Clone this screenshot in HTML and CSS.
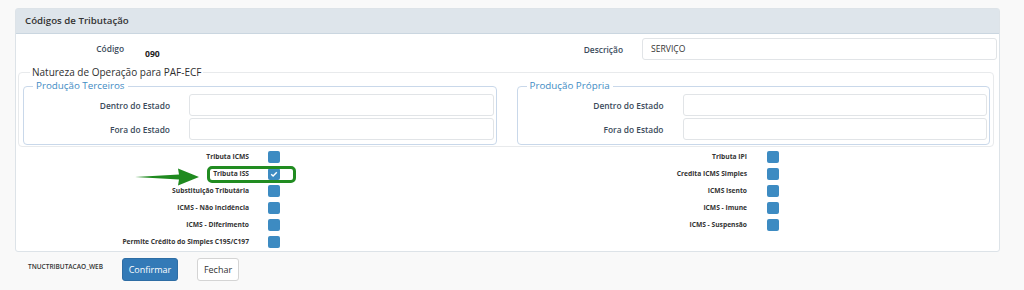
FILE: index.html
```html
<!DOCTYPE html>
<html lang="pt-BR">
<head>
    <meta charset="UTF-8">
    <title>Códigos de Tributação</title>
    <link rel="stylesheet" href="styles.css">
</head>
<body>
    <div class="panel">
        <div class="panel-heading">Códigos de Tributação</div>
        <div class="panel-body">
            <div class="top-row">
                <div class="half">
                    <label class="lbl lbl-code">Código</label>
                    <span class="code-value">090</span>
                </div>
                <div class="half">
                    <label class="lbl lbl-desc">Descrição</label>
                    <input type="text" class="txt" value="SERVIÇO">
                </div>
            </div>

            <fieldset class="paf">
                <legend>Natureza de Operação para PAF-ECF</legend>
                <div class="paf-cols">
                    <fieldset class="prod">
                        <legend>Produção Terceiros</legend>
                        <div class="prod-row">
                            <label class="lbl">Dentro do Estado</label>
                            <input type="text" class="txt">
                        </div>
                        <div class="prod-row">
                            <label class="lbl">Fora do Estado</label>
                            <input type="text" class="txt">
                        </div>
                    </fieldset>
                    <fieldset class="prod">
                        <legend>Produção Própria</legend>
                        <div class="prod-row">
                            <label class="lbl">Dentro do Estado</label>
                            <input type="text" class="txt">
                        </div>
                        <div class="prod-row">
                            <label class="lbl">Fora do Estado</label>
                            <input type="text" class="txt">
                        </div>
                    </fieldset>
                </div>
            </fieldset>

            <div class="checks">
                <div class="check-col left">
                    <div class="check-row"><span class="check-lbl">Tributa ICMS</span><span class="box"></span></div>
                    <div class="check-row"><span class="check-lbl">Tributa ISS</span><span class="box checked"><svg viewBox="0 0 12 12" width="12" height="12"><path d="M3.2 6.2 L5.1 8 L8.8 4.2" fill="none" stroke="#fff" stroke-width="1.4"/></svg></span></div>
                    <div class="check-row"><span class="check-lbl">Substituição Tributária</span><span class="box"></span></div>
                    <div class="check-row"><span class="check-lbl">ICMS - Não Incidência</span><span class="box"></span></div>
                    <div class="check-row"><span class="check-lbl">ICMS - Diferimento</span><span class="box"></span></div>
                    <div class="check-row"><span class="check-lbl">Permite Crédito do Simples C195/C197</span><span class="box"></span></div>
                </div>
                <div class="check-col right">
                    <div class="check-row"><span class="check-lbl">Tributa IPI</span><span class="box"></span></div>
                    <div class="check-row"><span class="check-lbl">Credita ICMS Simples</span><span class="box"></span></div>
                    <div class="check-row"><span class="check-lbl">ICMS Isento</span><span class="box"></span></div>
                    <div class="check-row"><span class="check-lbl">ICMS - Imune</span><span class="box"></span></div>
                    <div class="check-row"><span class="check-lbl">ICMS - Suspensão</span><span class="box"></span></div>
                </div>
            </div>
        </div>
    </div>

    <div class="footer">
        <span class="form-name">TNUCTRIBUTACAO_WEB</span>
        <button type="button" class="btn btn-primary">Confirmar</button>
        <button type="button" class="btn btn-default">Fechar</button>
    </div>

    <!-- annotation drawn over the form -->
    <svg class="arrow" width="66" height="20" viewBox="0 0 66 20">
        <polygon points="0,10 44,7.6 43,1.5 64,10 43,18.5 44,12.4" fill="#1f8a1f"/>
    </svg>
    <div class="highlight"></div>
</body>
</html>
```

FILE: styles.css
```css
body {
    margin: 0;
    background-color: #f9f9f9;
    font-family: "Open Sans", "Noto Sans", sans-serif;
    color: #333;
    position: relative;
    height: 290px;
}
.panel {
    margin: 8px 0 0 15px;
    width: 985px;
    box-sizing: border-box;
    background-color: #fff;
    border: 1px solid #dde3e8;
    border-radius: 3px;
}
.panel-heading {
    height: 24px;
    line-height: 24px;
    padding-left: 9px;
    background-color: #dee5eb;
    border-bottom: 1px solid #cad6e0;
    font-size: 9.7px;
    font-weight: 600;
    color: #333;
}
.panel-body {
    padding: 4px 2px 1px 2px;
}
.top-row {
    display: flex;
    height: 22px;
}
.half {
    width: 489px;
    display: flex;
    align-items: center;
}
.half + .half {
    flex: 1;
}
.lbl {
    font-size: 8.4px;
    font-weight: 600;
    color: #3b4b5b;
    text-align: right;
    flex-shrink: 0;
}
.lbl-code {
    width: 106px;
    align-self: flex-start;
    padding-top: 5px;
}
.code-value {
    margin-left: 21px;
    font-size: 8.6px;
    font-weight: 700;
    color: #222;
    align-self: flex-start;
    padding-top: 10px;
}
.lbl-desc {
    width: 116px;
    margin-right: 19px;
}
.txt {
    flex: 1;
    height: 22px;
    box-sizing: border-box;
    border: 1px solid #e1e4e7;
    border-radius: 3px;
    padding: 0 8px;
    font-family: inherit;
    font-size: 8.6px;
    color: #333;
    background-color: #fff;
    min-width: 0;
}
.paf {
    margin: 5px 3px 0 0;
    padding: 0 3px 1px 4px;
    border: 1px solid #e8eaec;
    border-radius: 4px;
    min-width: 0;
}
.paf > legend {
    margin-left: 7px;
    padding: 0 2px;
    font-size: 10px;
    line-height: 14px;
    color: #2f2f2f;
}
.paf-cols {
    display: grid;
    grid-template-columns: 1fr 1fr;
    gap: 20px;
}
.prod {
    margin: 0;
    padding: 1px 2px 4px 0;
    border: 1px solid #c9d8ea;
    border-radius: 4px;
    min-width: 0;
}
.prod > legend {
    margin-left: 9px;
    padding: 0 3px;
    font-size: 9.8px;
    line-height: 14px;
    color: #3f8cc4;
}
.prod-row {
    display: flex;
    align-items: center;
    height: 22px;
}
.prod-row + .prod-row {
    margin-top: 2px;
}
.prod-row .lbl {
    width: 146px;
    margin-right: 19px;
}
.checks {
    display: grid;
    grid-template-columns: 489px 1fr;
    margin-top: 1px;
}
.check-row {
    display: flex;
    align-items: center;
    height: 17px;
}
.check-lbl {
    flex-shrink: 0;
    text-align: right;
    font-size: 6.7px;
    font-weight: 700;
    color: #333;
}
.left .check-lbl {
    width: 231px;
    margin-right: 19px;
}
.right .check-lbl {
    width: 240px;
    margin-right: 20px;
}
.box {
    width: 12px;
    height: 12px;
    border-radius: 2px;
    background-color: #3d8bc2;
    display: block;
}
.box svg {
    display: block;
}
.footer {
    display: flex;
    align-items: flex-start;
    padding: 6px 0 0 28px;
}
.form-name {
    width: 94px;
    padding-top: 4px;
    font-size: 6.5px;
    font-weight: 600;
    color: #333;
}
.btn {
    height: 23px;
    border-radius: 3px;
    font-family: inherit;
    font-size: 9px;
    padding: 0;
    cursor: pointer;
}
.btn-primary {
    width: 56px;
    margin-right: 19px;
    background-color: #337ab7;
    border: 1px solid #2e6da4;
    color: #fff;
}
.btn-default {
    width: 42px;
    background-color: #fff;
    border: 1px solid #d4d4d4;
    color: #333;
}
.arrow {
    position: absolute;
    left: 135px;
    top: 167px;
}
.highlight {
    position: absolute;
    left: 207px;
    top: 166px;
    width: 89px;
    height: 17px;
    box-sizing: border-box;
    border: 3px solid #218c21;
    border-radius: 5px;
}
```
